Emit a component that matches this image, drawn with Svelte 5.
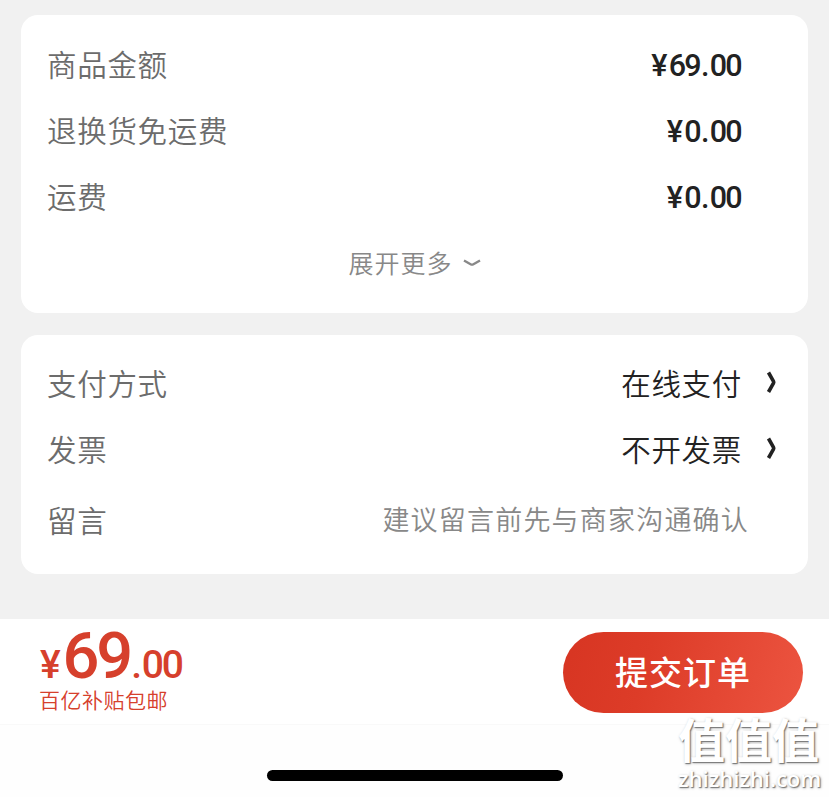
<script>
	const fees = [
		{ label: "商品金额", yuan: "69", cents: "00" },
		{ label: "退换货免运费", yuan: "0", cents: "00" },
		{ label: "运费", yuan: "0", cents: "00" },
	];

	const options = [
		{ label: "支付方式", value: "在线支付" },
		{ label: "发票", value: "不开发票" },
	];
</script>

<style>
	:global(body) {
		background: #f1f1f1;
	}

	.page {
		display: flex;
		flex-direction: column;
		box-sizing: border-box;
		width: 829px;
		height: 797px;
		padding-top: 15px;
		overflow: hidden;
		background: #f1f1f1;
		color: #222;
		font-family: "Noto Sans CJK SC", sans-serif;
		white-space: nowrap;
	}

	.card {
		box-sizing: border-box;
		margin: 0 21px 22px;
		padding: 15px 27px 0 26px;
		border-radius: 17px;
		background: #fff;
	}

	.fees {
		height: 298px;
	}

	.options {
		height: 239px;
		margin-bottom: 45px;
		padding-top: 14px;
	}

	.row {
		display: flex;
		align-items: center;
		justify-content: space-between;
		height: 66px;
		font-size: 29.5px;
		font-weight: 350;
		line-height: 40px;
		letter-spacing: 0.7px;
	}

	.row.message {
		height: 76px;
	}

	.label {
		color: #6c6c6c;
	}

	.price {
		margin-right: 40px;
		padding-top: 5px;
		font-family: Roboto, sans-serif;
		font-size: 30.5px;
		font-weight: 500;
		letter-spacing: -1.7px;
	}

	.price .yen {
		margin-right: 3px;
	}

	.price .dot {
		margin: 0 2px 0 1px;
	}

	.value {
		display: flex;
		align-items: center;
	}

	.value svg {
		margin: 0 2px 0 23px;
	}

	.hint {
		margin-right: 32px;
		color: #888;
		font-size: 27px;
		letter-spacing: 1.2px;
	}

	.more {
		display: flex;
		align-items: center;
		justify-content: center;
		width: 100%;
		height: 66px;
		padding: 2px 0 0 2px;
		border: 0;
		background: none;
		color: #888;
		font: 350 25px/36px "Noto Sans CJK SC", sans-serif;
		letter-spacing: 1px;
	}

	.more svg {
		margin: 2px 0 0 9px;
	}

	.footer {
		flex: 1;
		background: #fefefe;
	}

	.bar {
		display: flex;
		justify-content: space-between;
		box-sizing: border-box;
		height: 106px;
		padding: 13px 26px 0 39px;
		border-bottom: 1px solid #f9f9f9;
		background: #fff;
		color: #d6402c;
	}

	.total {
		height: 52px;
		font-family: Roboto, sans-serif;
		font-size: 39px;
		font-weight: 500;
		line-height: 48px;
		letter-spacing: -2.3px;
	}

	.total .yen {
		margin: 0 4px 0 1px;
	}

	.total .dot {
		margin: 0 2px 0 1px;
	}

	.total b {
		font-size: 65px;
		font-weight: 500;
		letter-spacing: -3px;
	}

	.note {
		font-size: 21px;
		font-weight: 350;
		line-height: 30px;
		letter-spacing: 0.5px;
	}

	.submit {
		width: 240px;
		height: 81px;
		padding: 0 0 2px;
		border: 0;
		border-radius: 41px;
		background: linear-gradient(105deg, #d73522, #dd3c28 35%, #ec5440);
		color: #fff;
		font: 500 33px/79px "Noto Sans CJK SC", sans-serif;
		letter-spacing: 1px;
	}

	.home {
		width: 296px;
		height: 11px;
		margin: 45px auto 0 267px;
		border-radius: 6px;
		background: #000;
	}

	.watermark {
		position: absolute;
		top: 712px;
		left: 678px;
		width: 145px;
		color: #fff;
		text-shadow: 1px 1px 1px #777, 1px 1px 3px #aaa;
	}

	.watermark .name {
		font-size: 47px;
		font-weight: 700;
		line-height: 52px;
	}

	.watermark .site {
		padding-top: 1px;
		font-family: "Open Sans", sans-serif;
		font-size: 22px;
		font-weight: 600;
		line-height: 26px;
	}
</style>

<div class="page">
	<section class="card fees">
		{#each fees as fee}
			<div class="row">
				<span class="label">{fee.label}</span>
				<span class="price"><span class="yen">¥</span>{fee.yuan}<span class="dot">.</span>{fee.cents}</span>
			</div>
		{/each}
		<button class="more">
			展开更多
			<svg width="20" height="10" viewBox="0 0 20 10">
				<path d="M2 2.5L8.6 6.2Q10 7 11.4 6.2L18 2.5" fill="none" stroke="currentColor" stroke-width="2.4" />
			</svg>
		</button>
	</section>

	<section class="card options">
		{#each options as option}
			<div class="row">
				<span class="label">{option.label}</span>
				<span class="value">
					{option.value}
					<svg width="14" height="24" viewBox="0 0 14 24">
						<path d="M3.5 2.5L8.5 11.3Q9 12.2 8.5 13.1L3.5 22" fill="none" stroke="currentColor" stroke-width="3.6" />
					</svg>
				</span>
			</div>
		{/each}
		<div class="row message">
			<span class="label">留言</span>
			<span class="hint">建议留言前先与商家沟通确认</span>
		</div>
	</section>

	<footer class="footer">
		<div class="bar">
			<div>
				<div class="total"><span class="yen">¥</span><b>69</b><span class="dot">.</span>00</div>
				<div class="note">百亿补贴包邮</div>
			</div>
			<button class="submit">提交订单</button>
		</div>
		<div class="home"></div>
	</footer>

	<div class="watermark">
		<div class="name">值值值</div>
		<div class="site">zhizhizhi.com</div>
	</div>
</div>
